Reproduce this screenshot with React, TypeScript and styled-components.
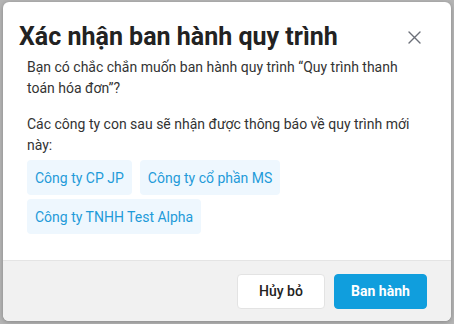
import React from 'react';
import styled, { createGlobalStyle } from 'styled-components';

const GlobalStyle = createGlobalStyle`
  html, body {
    margin: 0;
    padding: 0;
  }
  body {
    background: #b4b4b4;
    font-family: Roboto, "Liberation Sans", Arial, sans-serif;
  }
  * {
    box-sizing: border-box;
  }
`;

const Overlay = styled.div`
  padding: 2px 3px 3px 3px;
  min-height: 324px;
`;

const Modal = styled.div`
  background: #fff;
  border-radius: 6px;
  overflow: hidden;
  box-shadow: 0 1px 4px rgba(0, 0, 0, 0.25);
  display: flex;
  flex-direction: column;
  height: 319px;
`;

const Header = styled.div`
  display: flex;
  align-items: center;
  justify-content: space-between;
  padding: 21px 28px 0 16px;
`;

const Title = styled.h2`
  margin: 0;
  font-size: 25px;
  line-height: 28px;
  font-weight: 700;
  color: #222;
`;

const CloseButton = styled.button`
  border: 0;
  background: transparent;
  padding: 0;
  width: 18px;
  height: 18px;
  display: flex;
  align-items: center;
  justify-content: center;
  color: #6b6f78;
  cursor: pointer;
`;

const Body = styled.div`
  flex: 1;
  padding: 6px 24px 0 24px;
`;

const Text = styled.p`
  margin: 0 0 15px 0;
  font-size: 14px;
  line-height: 21px;
  color: #333;
`;

const ListText = styled(Text)`
  margin-bottom: 4px;
`;

const Chips = styled.div`
  display: flex;
  flex-wrap: wrap;
  gap: 4px 8px;
`;

const Chip = styled.span`
  display: inline-flex;
  align-items: center;
  height: 35px;
  padding: 0 8px;
  border-radius: 4px;
  background: #eef7fe;
  color: #1f9bd9;
  font-size: 14px;
`;

const Footer = styled.div`
  display: flex;
  justify-content: flex-end;
  align-items: center;
  gap: 9px;
  height: 61px;
  padding: 0 24px 0 0;
  background: #f1f1f1;
  border-top: 1px solid #e4e4e4;
`;

const Button = styled.button<{ $primary?: boolean }>`
  height: 35px;
  width: ${(p) => (p.$primary ? '93px' : '88px')};
  padding: 0;
  border-radius: 4px;
  font-family: inherit;
  font-size: 14px;
  font-weight: ${(p) => (p.$primary ? 700 : 500)};
  border: 1px solid ${(p) => (p.$primary ? '#109edd' : '#e3e3e3')};
  background: ${(p) => (p.$primary ? '#109edd' : '#fff')};
  color: ${(p) => (p.$primary ? '#fff' : '#222')};
  cursor: pointer;
`;

const companies = ['Công ty CP JP', 'Công ty cổ phần MS', 'Công ty TNHH Test Alpha'];

export default function App() {
  return (
    <>
      <GlobalStyle />
      <Overlay>
        <Modal>
          <Header>
            <Title>Xác nhận ban hành quy trình</Title>
            <CloseButton aria-label="Đóng">
              <svg width="13" height="13" viewBox="0 0 13 13">
                <path d="M1 1L12 12M12 1L1 12" stroke="currentColor" strokeWidth="1.4" strokeLinecap="round" />
              </svg>
            </CloseButton>
          </Header>
          <Body>
            <Text>Bạn có chắc chắn muốn ban hành quy trình “Quy trình thanh toán hóa đơn”?</Text>
            <ListText>Các công ty con sau sẽ nhận được thông báo về quy trình mới này:</ListText>
            <Chips>
              {companies.map((c) => (
                <Chip key={c}>{c}</Chip>
              ))}
            </Chips>
          </Body>
          <Footer>
            <Button>Hủy bỏ</Button>
            <Button $primary>Ban hành</Button>
          </Footer>
        </Modal>
      </Overlay>
    </>
  );
}
